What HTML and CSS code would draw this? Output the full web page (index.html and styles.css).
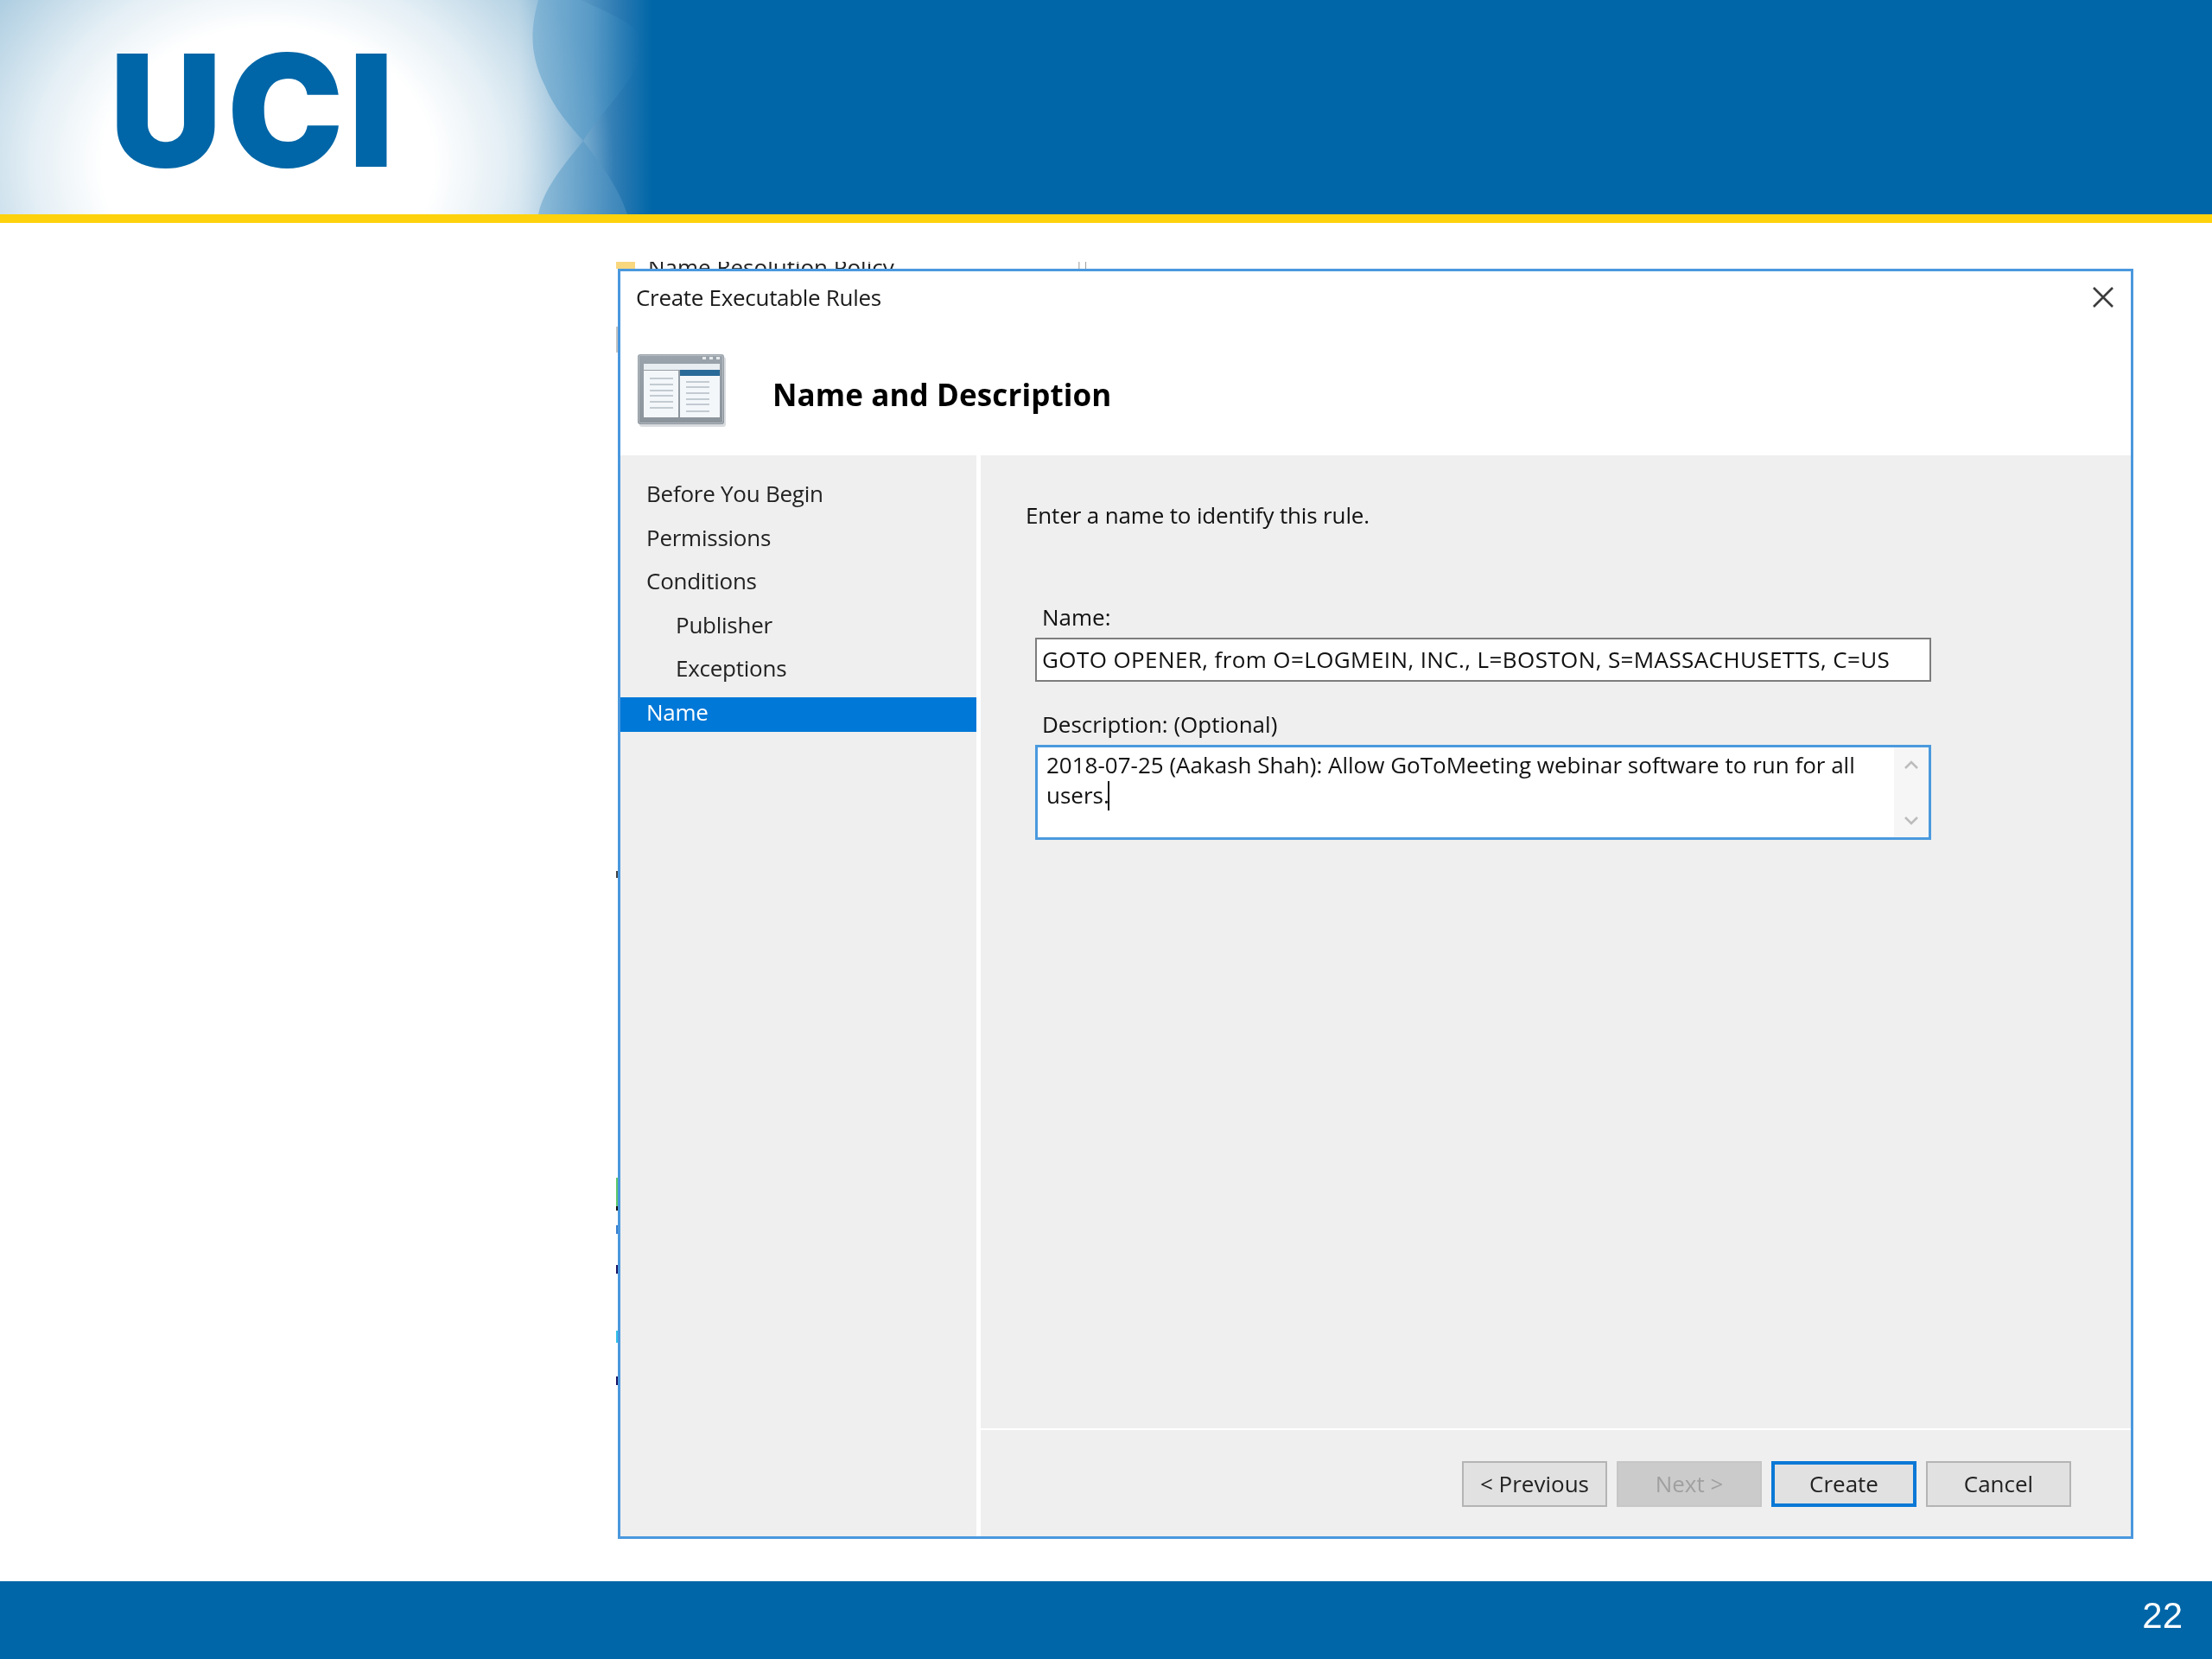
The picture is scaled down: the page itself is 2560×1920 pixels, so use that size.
FILE: index.html
```html
<!DOCTYPE html>
<html lang="en">
<head>
<meta charset="utf-8">
<title>UCI slide 22</title>
<link rel="stylesheet" href="styles.css">
</head>
<body>
<div class="slide">
  <header class="banner">
    <svg class="wave" viewBox="0 0 160 248" width="160" height="248" aria-hidden="true">
      <defs>
        <linearGradient id="waveFill" x1="0" y1="0" x2="1" y2="0"><stop offset="0" stop-color="#7db2d4"/><stop offset=".55" stop-color="#5a9cc8"/><stop offset="1" stop-color="#0f6cab"/></linearGradient>
        <linearGradient id="waveFillLow" x1="0" y1="0" x2="1" y2="0"><stop offset="0" stop-color="#82b5d5"/><stop offset="1" stop-color="#3f88bc"/></linearGradient>
      </defs>
      <path fill="url(#waveFill)" d="M8 0C0 30 -4 60 16 100C26 125 44 145 60 163C82 125 128 90 128 50C128 30 90 15 57 0Z"/>
      <path fill="url(#waveFillLow)" d="M60 163C34 195 14 220 8 248H111C100 215 80 190 60 163Z"/>
    </svg>
    <div class="logo">UCI</div>
  </header>
  <div class="rule"></div>
  <main class="stage">
    <div class="behind">
      <span class="behind-folder"></span>
      <span class="behind-text">Name Resolution Policy</span>
      <span class="behind-mark">||</span>
    </div>
    <div class="specks"></div>
    <section class="dialog">
      <div class="titlebar">
        <span class="title">Create Executable Rules</span>
        <svg class="close" viewBox="0 0 24 24" width="24" height="24" aria-hidden="true"><path d="M1 1L23 23M23 1L1 23"/></svg>
      </div>
      <div class="wizhead">
        <svg class="wizicon" viewBox="0 0 102 84" width="102" height="84" aria-hidden="true">
          <defs>
            <linearGradient id="frame" x1="0" y1="0" x2="0" y2="1"><stop offset="0" stop-color="#9aa3ab"/><stop offset="1" stop-color="#8b939b"/></linearGradient>
          </defs>
          <rect x="2" y="3" width="100" height="81" rx="3" fill="#d9dcdf"/>
          <rect x="0" y="0" width="100" height="81" rx="3" fill="url(#frame)"/>
          <rect x="1.500" y="1.500" width="97" height="78" rx="2" fill="none" stroke="#b6bcc2"/>
          <rect x="75" y="3" width="4" height="3" fill="#e6e9ec"/><rect x="83" y="3" width="4" height="3" fill="#e6e9ec"/><rect x="91" y="3" width="4" height="3" fill="#e6e9ec"/>
          <rect x="7" y="11" width="88" height="7" fill="#e8edf1"/>
          <rect x="7" y="19" width="40" height="54" fill="#f4f7fa"/>
          <rect x="49" y="18" width="46" height="55" fill="#f4f7fa"/>
          <rect x="49" y="18" width="46" height="7" fill="#2a6a98"/>
          <g class="ico-lines">
            <path d="M14 28H41M14 35H41M14 42H41M14 48H41M14 55H41M14 62H41"/>
            <path d="M56 32H83M56 38H83M56 45H83M56 52H83M56 58H83M56 66H83"/>
          </g>
        </svg>
        <h1 class="heading">Name and Description</h1>
      </div>
      <div class="wizbody">
        <nav class="steps">
          <div class="step">Before You Begin</div>
          <div class="step">Permissions</div>
          <div class="step">Conditions</div>
          <div class="step sub">Publisher</div>
          <div class="step sub">Exceptions</div>
          <div class="step current">Name</div>
        </nav>
        <div class="pane">
          <div class="content">
            <p class="prompt">Enter a name to identify this rule.</p>
            <div class="form">
              <div class="label label-name">Name:</div>
              <div class="field">GOTO OPENER, from O=LOGMEIN, INC., L=BOSTON, S=MASSACHUSETTS, C=US</div>
              <div class="label label-desc">Description: (Optional)</div>
              <div class="area">
                <div class="area-text">2018-07-25 (Aakash Shah): Allow GoToMeeting webinar software to run for all<br>users.<span class="caret"></span></div>
                <div class="scroll">
                  <svg viewBox="0 0 16 10" width="16" height="10" aria-hidden="true"><path d="M1 9L8 2L15 9"/></svg>
                  <svg viewBox="0 0 16 10" width="16" height="10" aria-hidden="true"><path d="M1 1L8 8L15 1"/></svg>
                </div>
              </div>
            </div>
          </div>
          <div class="actions">
            <div class="btn">&lt; Previous</div>
            <div class="btn off">Next &gt;</div>
            <div class="btn primary">Create</div>
            <div class="btn">Cancel</div>
          </div>
        </div>
      </div>
    </section>
  </main>
  <footer class="footer"><span class="page">22</span></footer>
</div>
</body>
</html>
```

FILE: styles.css
```css
* { box-sizing: border-box; }
html, body { margin: 0; padding: 0; background: #fff; }
.slide {
  width: 2560px; height: 1920px; display: flex; flex-direction: column;
  overflow: hidden; background: #fff; filter: blur(0.7px);
  font-family: "Open Sans", "Noto Sans", sans-serif; color: #111;
}
.banner {
  position: relative; height: 248px; flex: none; padding: 0 0 0 127px;
  background-color: #0066a7;
  background-image:
    radial-gradient(ellipse 400px 330px at 310px 190px, #fff 0, #fff 48%, rgba(255,255,255,.7) 68%, rgba(255,255,255,0) 100%),
    linear-gradient(to right, #a6c9de 0, #a6c9de 600px, #6ba4ca 660px, #2d7bb3 715px, #0066a7 755px);
  display: flex; align-items: center;
}
.wave { position: absolute; left: 615px; top: 0; opacity: .8; }
.logo {
  font-family: "Inter", "Liberation Sans", sans-serif; font-weight: 900; font-size: 180px; line-height: 1;
  color: #0066a7; letter-spacing: 6px; margin-top: 8px; position: relative;
}
.rule { height: 10px; flex: none; background: #fdd20c; }
.stage { position: relative; flex: 1; padding: 53px 0 0 715px; }
.behind {
  position: absolute; left: 713px; top: 45px; width: 560px; height: 8px; overflow: hidden;
  display: flex; align-items: flex-start;
}
.behind-folder { width: 22px; height: 8px; background: #f9d77e; flex: none; }
.behind-text { margin: -9px 0 0 15px; font-size: 26px; line-height: 30px; color: #222; white-space: nowrap; width: 495px; }
.behind-mark { margin-top: -4px; font-size: 14px; line-height: 14px; color: #999; }
.specks {
  position: absolute; left: 713px; top: 60px; width: 3px; height: 1340px;
  background: linear-gradient(to bottom,
    transparent 0, transparent 60px, #c4c4c4 60px, #c4c4c4 90px, transparent 90px, transparent 690px,
    #444 690px, #444 698px, transparent 698px, transparent 1045px,
    #5cc96a 1045px, #5cc96a 1078px, #111 1078px, #111 1083px, transparent 1083px, transparent 1100px,
    #3a7fd0 1100px, #3a7fd0 1110px, transparent 1110px, transparent 1146px,
    #1b1464 1146px, #1b1464 1156px, transparent 1156px, transparent 1222px,
    #33c0e8 1222px, #33c0e8 1236px, transparent 1236px, transparent 1275px,
    #1b1464 1275px, #1b1464 1285px, transparent 1285px);
}
.dialog {
  position: relative; width: 1754px; height: 1470px; display: flex; flex-direction: column;
  border: 3px solid #4a98de; background: #fff;
}
.titlebar { flex: none; height: 62px; display: flex; align-items: center; justify-content: space-between; padding: 0 20px 2px 18px; }
.title { font-size: 26px; letter-spacing: -0.3px; color: #1a1a1a; }
.close path { fill: none; stroke: #3c3c3c; stroke-width: 2.600; }
.wizhead { flex: none; height: 151px; display: flex; align-items: center; padding-left: 20px; gap: 54px; }
.wizicon { flex: none; }
.ico-lines path { fill: none; stroke: #c3cbd2; stroke-width: 2; }
.heading { margin: 10px 0 0; font-size: 35px; font-weight: 700; letter-spacing: 0.1px; color: #000; }
.wizbody { flex: 1; display: flex; gap: 5px; min-height: 0; }
.steps { width: 412px; flex: none; background: #efefef; padding-top: 27px; display: flex; flex-direction: column; gap: 10.600px; }
.step { height: 40px; padding: 0 0 6px 30px; display: flex; align-items: center; font-size: 26px; letter-spacing: -0.25px; color: #222; }
.step.sub { padding-left: 64px; }
.step.current { background: #0078d7; color: #fff; }
.pane { flex: 1; display: flex; flex-direction: column; background: #efefef; }
.content { flex: 1; padding: 52px 0 0 52px; border-bottom: 2px solid #fff; }
.prompt { margin: 0; font-size: 26px; line-height: 34px; letter-spacing: -0.15px; }
.form { margin: 85px 0 0 11px; width: 1037px; }
.label { font-size: 26px; line-height: 32px; padding-left: 8px; margin-bottom: 8px; }
.label-desc { margin-top: 33px; }
.field {
  height: 51px; border: 2px solid #7d7d7d; background: #fff; padding: 0 0 2px 6px;
  display: flex; align-items: center; font-size: 26px; letter-spacing: 0.4px; white-space: nowrap; color: #111;
}
.area { height: 110px; border: 3px solid #4a9ade; background: #fff; display: flex; }
.area-text { flex: 1; padding: 3px 0 0 10px; font-size: 26px; line-height: 35px; color: #111; white-space: nowrap; }
.caret { display: inline-block; width: 2px; height: 34px; background: #111; vertical-align: -8px; margin-left: -2px; }
.scroll { width: 40px; flex: none; background: #f6f6f6; display: flex; flex-direction: column; align-items: center; justify-content: space-between; padding: 15px 0 14px; }
.scroll path { fill: none; stroke: #bcbcbc; stroke-width: 2.500; }
.actions { flex: none; height: 123px; padding: 36px 69px 0 0; display: flex; justify-content: flex-end; align-items: flex-start; gap: 11px; }
.btn {
  width: 168px; height: 53px; border: 2px solid #b4b4b4; background: #e1e1e1; padding-bottom: 2px;
  display: flex; align-items: center; justify-content: center;
  font-size: 26px; color: #222;
}
.btn.off { background: #cbcbcb; border-color: #c6c6c6; color: #a0a0a0; }
.btn.primary { border: 4px solid #0a78d6; }
.footer { height: 90px; flex: none; background: #0066a7; display: flex; justify-content: flex-end; align-items: center; padding: 0 34px 10px 0; }
.page { font-family: "Liberation Sans", Arial, sans-serif; font-size: 42px; line-height: 1; color: #fff; }
```
